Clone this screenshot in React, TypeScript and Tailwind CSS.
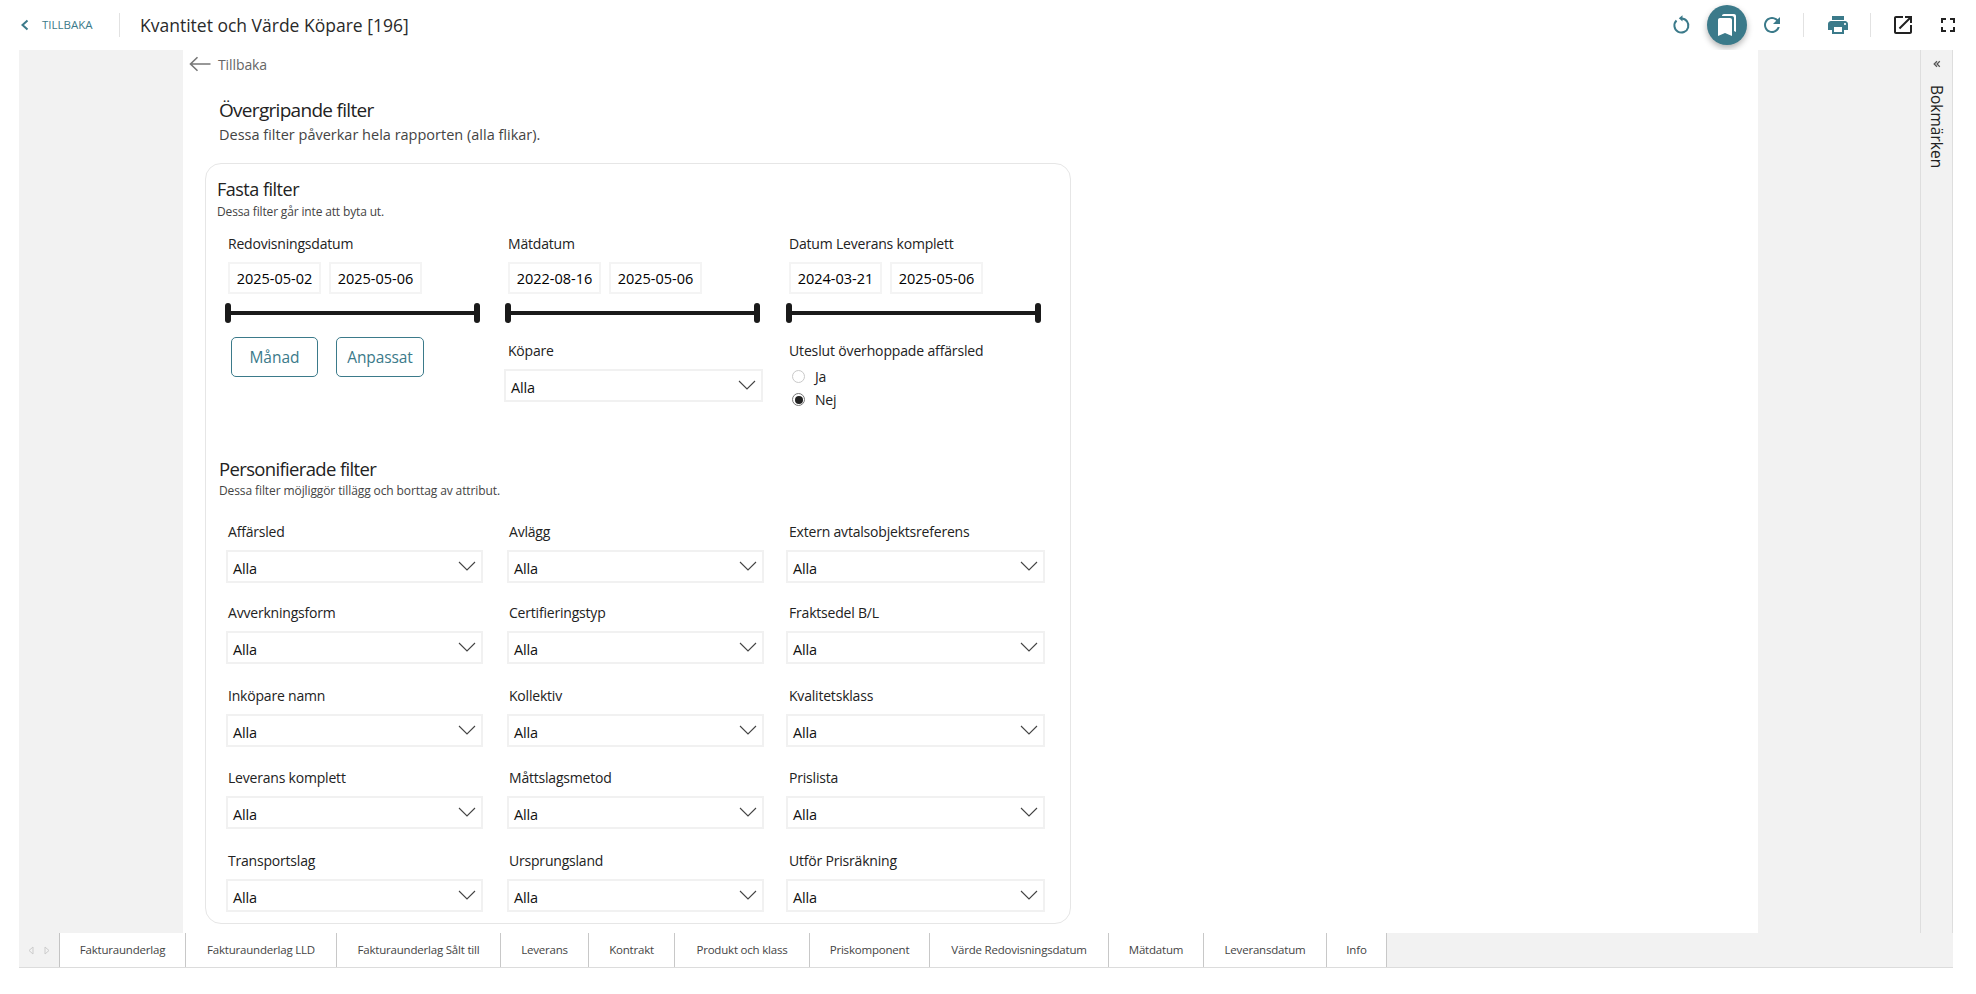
import React from "react";

const teal = "#3b7a8a";
const font = { fontFamily: '"Open Sans", "Noto Sans", sans-serif' };

function Icon({ d, size = 24, color = teal }: { d: string; size?: number; color?: string }) {
  return (
    <svg width={size} height={size} viewBox="0 0 24 24" fill={color} className="shrink-0">
      <path d={d} />
    </svg>
  );
}

function Chevron() {
  return (
    <svg width="18" height="10" viewBox="0 0 18 10" fill="none" stroke="#444" strokeWidth="1.1" className="shrink-0">
      <path d="M1 1l8 8 8-8" />
    </svg>
  );
}

function Select({ className = "" }: { className?: string }) {
  return (
    <div className={"h-[33px] border-2 border-[#f1f1f1] flex items-center justify-between pl-[5px] pr-[5px] text-[14.5px] tracking-[-0.15px] text-[#111] " + className}>
      <span className="pt-[4px]">Alla</span>
      <span className="-mt-[1px]"><Chevron /></span>
    </div>
  );
}

function DateBox({ value }: { value: string }) {
  return (
    <div className="w-[93px] h-[32px] border-2 border-[#f4f4f4] flex items-center justify-center pt-[1px] text-[14.5px] text-black">
      {value}
    </div>
  );
}

function Slider() {
  return (
    <div className="relative h-[20px] w-[255px] -ml-[1px] flex items-center">
      <div className="w-full h-[4px] bg-[#1a1a1a]" />
      <div className="absolute left-0 top-0 w-[6px] h-[20px] rounded-[3px] bg-[#1a1a1a]" />
      <div className="absolute right-0 top-0 w-[6px] h-[20px] rounded-[3px] bg-[#1a1a1a]" />
    </div>
  );
}

function DateColumn({ label, from, to }: { label: string; from: string; to: string }) {
  return (
    <div>
      <div className="ml-[2px] h-[20px] leading-[20px] text-[14px] tracking-[-0.2px] text-[#222]">{label}</div>
      <div className="ml-[2px] mt-[8px] flex gap-[8px]">
        <DateBox value={from} />
        <DateBox value={to} />
      </div>
      <div className="mt-[9px]"><Slider /></div>
    </div>
  );
}

function Field({ label, wide }: { label: string; wide: boolean }) {
  return (
    <div>
      <div className="ml-[2px] h-[20px] leading-[20px] text-[14px] tracking-[-0.2px] text-[#222]">{label}</div>
      <Select className={wide ? "mt-[8px] w-[259px] -ml-[1px]" : "mt-[8px] w-[257px]"} />
    </div>
  );
}

const rows: { labels: string[]; mt: string }[] = [
  { labels: ["Affärsled", "Avlägg", "Extern avtalsobjektsreferens"], mt: "mt-[23px]" },
  { labels: ["Avverkningsform", "Certifieringstyp", "Fraktsedel B/L"], mt: "mt-[20px]" },
  { labels: ["Inköpare namn", "Kollektiv", "Kvalitetsklass"], mt: "mt-[22px]" },
  { labels: ["Leverans komplett", "Måttslagsmetod", "Prislista"], mt: "mt-[21px]" },
  { labels: ["Transportslag", "Ursprungsland", "Utför Prisräkning"], mt: "mt-[22px]" },
];

const tabs: [string, number][] = [
  ["Fakturaunderlag", 126],
  ["Fakturaunderlag LLD", 151],
  ["Fakturaunderlag Sålt till", 164],
  ["Leverans", 88],
  ["Kontrakt", 86],
  ["Produkt och klass", 135],
  ["Priskomponent", 120],
  ["Värde Redovisningsdatum", 179],
  ["Mätdatum", 95],
  ["Leveransdatum", 123],
  ["Info", 60],
];

export default function App() {
  return (
    <div style={font} className="h-[994px] w-[1976px] overflow-hidden bg-white text-[#222]">
      <header className="h-[50px] flex items-center">
        <div className="ml-[19px] flex items-center w-[101px] h-[24px] border-r border-[#e2e2e2]">
          <svg width="12" height="14" viewBox="0 0 12 14" fill="none" stroke={teal} strokeWidth="2" className="shrink-0">
            <path d="M8.5 2.5L3.5 7l5 4.5" />
          </svg>
          <span className="ml-[11px] text-[11.5px]" style={{ color: teal }}>TILLBAKA</span>
        </div>
        <h1 className="ml-[20px] pt-[1px] text-[17.5px] font-medium text-[#2a2a2a] whitespace-nowrap">Kvantitet och Värde Köpare [196]</h1>
        <div className="ml-auto flex items-center">
          <svg width="24" height="24" viewBox="0 0 24 24" fill="none" stroke={teal} strokeWidth="2" className="shrink-0">
            <path d="M7.5 7.5a7 7 0 1 0 5-2" />
            <path d="M13.5 2.2L9.8 5.3l3.7 3.2z" fill={teal} stroke="none" />
          </svg>
          <div className="ml-[14px] w-[40px] h-[40px] rounded-full flex items-center justify-center shadow-[0_3px_6px_rgba(0,0,0,0.3)]" style={{ background: teal }}>
            <Icon color="#fff" d="M19 18l2 1V3c0-1.1-.9-2-2-2H8.99C7.89 1 7 1.9 7 3h10c1.1 0 2 .9 2 2v13zM15 5H5c-1.1 0-2 .9-2 2v16l7-3 7 3V7c0-1.1-.9-2-2-2z" />
          </div>
          <div className="ml-[13px]">
            <Icon d="M17.65 6.35C16.2 4.9 14.21 4 12 4c-4.42 0-7.99 3.58-7.99 8s3.57 8 7.99 8c3.73 0 6.84-2.55 7.73-6h-2.08c-.82 2.33-3.04 4-5.65 4-3.31 0-6-2.69-6-6s2.69-6 6-6c1.66 0 3.14.69 4.22 1.78L13 11h7V4l-2.35 2.35z" />
          </div>
          <div className="ml-[19px] w-px h-[24px] bg-[#e2e2e2]" />
          <div className="ml-[22px]">
            <Icon d="M19 8H5c-1.66 0-3 1.34-3 3v6h4v4h12v-4h4v-6c0-1.66-1.34-3-3-3zm-3 11H8v-5h8v5zm3-7c-.55 0-1-.45-1-1s.45-1 1-1 1 .45 1 1-.45 1-1 1zm-1-9H6v4h12V3z" />
          </div>
          <div className="ml-[20px] w-px h-[24px] bg-[#e2e2e2]" />
          <div className="ml-[20px]">
            <Icon color="#222" d="M19 19H5V5h7V3H5c-1.11 0-2 .9-2 2v14c0 1.1.89 2 2 2h14c1.1 0 2-.9 2-2v-7h-2v7zM14 3v2h3.59l-9.83 9.83 1.41 1.41L19 6.41V10h2V3h-7z" />
          </div>
          <div className="ml-[21px] mr-[16px]">
            <Icon color="#222" d="M7 14H5v5h5v-2H7v-3zm-2-4h2V7h3V5H5v5zm12 7h-3v2h5v-5h-2v3zM14 5v2h3v3h2V5h-5z" />
          </div>
        </div>
      </header>

      <main className="h-[883px] mx-[19px] w-[1934px] flex">
        <div className="w-[164px] bg-[#f2f2f2]" />
        <div className="w-[1575px] bg-white overflow-hidden">
          <div className="ml-[6px] mt-[3px] h-[22px] flex items-center">
            <svg width="22" height="16" viewBox="0 0 22 16" fill="none" stroke="#777" strokeWidth="1.6" className="shrink-0">
              <path d="M21.5 8H1.5M8.5 1.2L1.5 8l7 6.8" />
            </svg>
            <span className="ml-[7px] text-[14px] tracking-[-0.1px] text-[#666]">Tillbaka</span>
          </div>
          <div className="ml-[36px] mt-[21px] h-[28px] leading-[28px] text-[19px] tracking-[-0.7px] text-[#222]">Övergripande filter</div>
          <div className="ml-[36px] mt-[0px] h-[22px] leading-[22px] text-[14.5px] text-[#444]">Dessa filter påverkar hela rapporten (alla flikar).</div>

          <section className="ml-[22px] mt-[17px] w-[866px] h-[761px] rounded-[16px] border border-[#e6e6e6] overflow-hidden">
            <div className="ml-[11px] mt-[12px] h-[26px] leading-[26px] text-[18px] tracking-[-0.5px] text-[#222]">Fasta filter</div>
            <div className="ml-[11px] mt-[2px] h-[16px] leading-[16px] text-[12px] tracking-[-0.15px] text-[#444]">Dessa filter går inte att byta ut.</div>

            <div className="ml-[20px] mt-[14px] grid grid-cols-[280px_281px_257px]">
              <DateColumn label="Redovisningsdatum" from="2025-05-02" to="2025-05-06" />
              <DateColumn label="Mätdatum" from="2022-08-16" to="2025-05-06" />
              <DateColumn label="Datum Leverans komplett" from="2024-03-21" to="2025-05-06" />
            </div>

            <div className="ml-[20px] grid grid-cols-[280px_281px_257px]">
              <div className="mt-[14px] ml-[5px] flex gap-[18px]">
                <button className="w-[87px] h-[40px] rounded-[5px] border pt-[1px] text-[15.5px]" style={{ borderColor: teal, color: teal }}>Månad</button>
                <button className="w-[88px] h-[40px] rounded-[5px] border pt-[1px] text-[15.5px] tracking-[-0.1px]" style={{ borderColor: teal, color: teal }}>Anpassat</button>
              </div>
              <div className="mt-[18px]">
                <div className="ml-[2px] h-[20px] leading-[20px] text-[14px] tracking-[-0.2px]">Köpare</div>
                <Select className="mt-[8px] w-[259px] -ml-[2px]" />
              </div>
              <div className="mt-[18px]">
                <div className="ml-[2px] h-[20px] leading-[20px] text-[14px] tracking-[-0.15px]">Uteslut överhoppade affärsled</div>
                <div className="ml-[5px] mt-[4px] flex items-center h-[23px] text-[14px] tracking-[-0.2px]">
                  <span className="w-[13px] h-[13px] rounded-full border border-[#c9c9c9]" />
                  <span className="ml-[10px]">Ja</span>
                </div>
                <div className="ml-[5px] flex items-center h-[23px] text-[14px] tracking-[-0.2px]">
                  <span className="w-[13px] h-[13px] rounded-full border border-[#777] flex items-center justify-center">
                    <span className="w-[8px] h-[8px] rounded-full bg-[#222]" />
                  </span>
                  <span className="ml-[10px]">Nej</span>
                </div>
              </div>
            </div>

            <div className="ml-[13px] mt-[45px] h-[26px] leading-[26px] text-[18.5px] tracking-[-0.65px] text-[#222]">Personifierade filter</div>
            <div className="ml-[13px] mt-[1px] h-[16px] leading-[16px] text-[12px] tracking-[-0.1px] text-[#444]">Dessa filter möjliggör tillägg och borttag av attribut.</div>

            <div className="ml-[20px]">
              {rows.map((r) => (
                <div key={r.labels[0]} className={"grid grid-cols-[281px_280px_257px] " + r.mt}>
                  {r.labels.map((l, i) => (
                    <Field key={l} label={l} wide={i === 2} />
                  ))}
                </div>
              ))}
            </div>
          </section>
        </div>
        <div className="w-[162px] bg-[#f2f2f2]" />
        <aside className="w-[33px] bg-[#f2f2f2] border-l border-r border-[#dedede] flex flex-col items-center">
          <svg width="8" height="8" viewBox="0 0 10 10" fill="none" stroke="#555" strokeWidth="1.6" className="mt-[10px] shrink-0">
            <path d="M5 1.5L1.5 5 5 8.5M8.5 1.5L5 5l3.5 3.5" />
          </svg>
          <span className="mt-[17px] text-[15.5px] text-[#222] [writing-mode:vertical-rl] whitespace-nowrap">Bokmärken</span>
        </aside>
      </main>

      <footer className="mx-[19px] w-[1934px] h-[35px] flex bg-[#f2f2f2] border-b border-[#dcdcdc]">
        <div className="w-[41px] flex items-center justify-center gap-[10px] border-r border-[#c4c4c4]">
          <svg width="6" height="9" viewBox="0 0 6 9" fill="none" stroke="#ccc"><path d="M5 1L1 4.5 5 8z" /></svg>
          <svg width="6" height="9" viewBox="0 0 6 9" fill="none" stroke="#ccc"><path d="M1 1l4 3.5L1 8z" /></svg>
        </div>
        {tabs.map(([t, w]) => (
          <div key={t} style={{ width: w }} className="bg-white border-r border-[#c8c8c8] flex items-center justify-center text-[11.5px] tracking-[-0.2px] text-[#444] whitespace-nowrap">
            {t}
          </div>
        ))}
      </footer>
    </div>
  );
}
